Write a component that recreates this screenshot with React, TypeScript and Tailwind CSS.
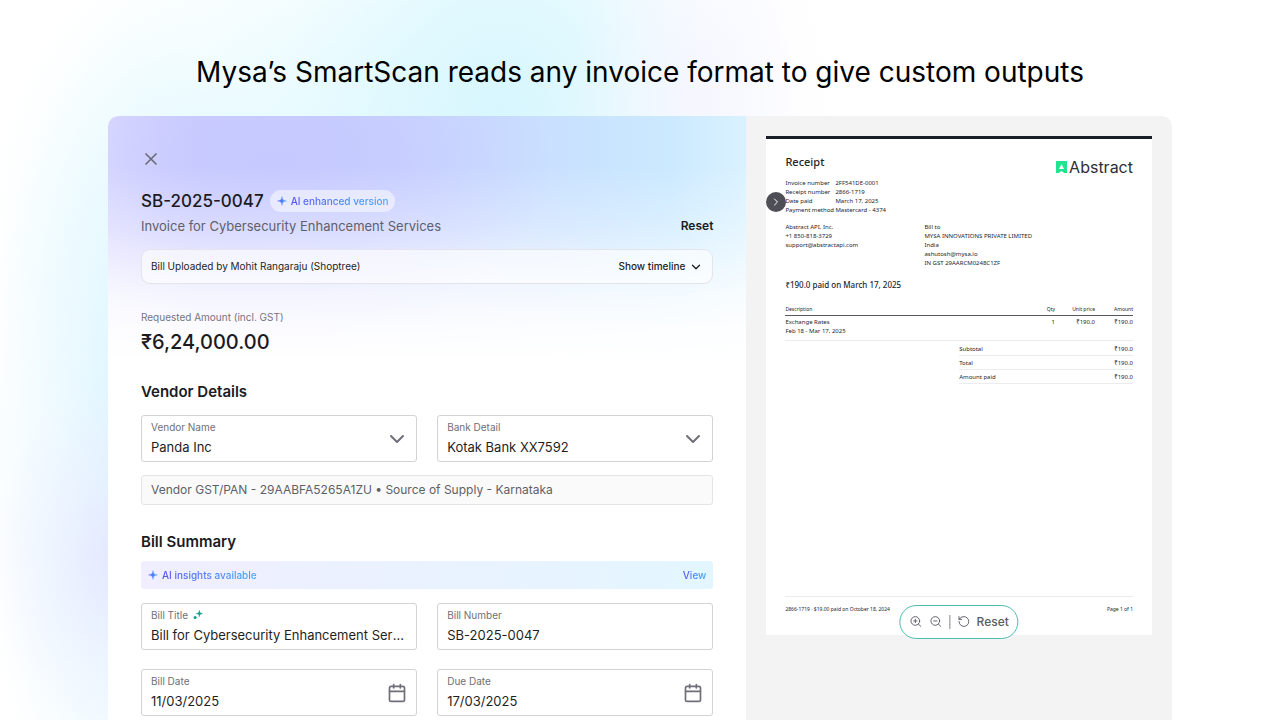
import React from 'react';
import { Calendar, ChevronDown, ChevronRight, RotateCcw, X, ZoomIn, ZoomOut } from 'lucide-react';

const receiptMeta = [
  { label: 'Invoice number', value: '2FF541DE-0001' },
  { label: 'Receipt number', value: '2866-1719' },
  { label: 'Date paid', value: 'March 17, 2025' },
  { label: 'Payment method', value: 'Mastercard - 4374' },
];

const sellerLines = ['Abstract API, Inc.', '+1 850-818-3729', 'support@abstractapi.com'];

const buyerLines = [
  'Bill to',
  'MYSA INNOVATIONS PRIVATE LIMITED',
  'India',
  'ashutosh@mysa.io',
  'IN GST 29AARCM0248C1ZF',
];

const totals = [
  { label: 'Subtotal', value: '₹190.0' },
  { label: 'Total', value: '₹190.0' },
  { label: 'Amount paid', value: '₹190.0' },
];

const Sparkle: React.FC = () => (
  <svg className="h-[10px] w-[10px] shrink-0" viewBox="0 0 10 10" aria-hidden="true">
    <defs>
      <linearGradient id="sparkle" x1="0" y1="0" x2="1" y2="0">
        <stop offset="0" stopColor="#5a55f5" />
        <stop offset="1" stopColor="#3fa9fb" />
      </linearGradient>
    </defs>
    <path
      d="M5 0.6C5.3 3.8 6.2 4.7 9.4 5C6.2 5.3 5.3 6.2 5 9.4C4.7 6.2 3.8 5.3 0.6 5C3.8 4.7 4.7 3.8 5 0.6Z"
      fill="url(#sparkle)"
      stroke="url(#sparkle)"
      strokeWidth="0.4"
    />
  </svg>
);

const GreenSparkles: React.FC = () => (
  <svg className="h-[10px] w-[10px]" viewBox="0 0 10 10" fill="#0f9f8f" aria-hidden="true">
    <path d="M6.4 0.6C6.7 2.8 7.2 3.3 9.4 3.6C7.2 3.9 6.7 4.4 6.4 6.6C6.1 4.4 5.6 3.9 3.4 3.6C5.6 3.3 6.1 2.8 6.4 0.6Z" stroke="#0f9f8f" strokeWidth="0.6" />
    <circle cx="2.1" cy="7.4" r="1.5" />
  </svg>
);

interface FieldProps {
  id: string;
  label: string;
  value: string;
  kind?: 'select' | 'date' | 'text';
  sparkle?: boolean;
}

const Field: React.FC<FieldProps> = ({ id, label, value, kind = 'text', sparkle }) => (
  <div className="flex h-[47px] items-center rounded-[3px] border border-[#d3d3d6] bg-white pr-[7px] pl-[9px]">
    <div className="flex min-w-0 flex-1 flex-col gap-[2px] pb-[2px]">
      <label htmlFor={id} className="flex items-center gap-[5px] text-[10px] leading-4 text-[#6f6f7a]">
        {label}
        {sparkle && <GreenSparkles />}
      </label>
      {kind === 'select' ? (
        <select id={id} className="h-5 appearance-none bg-transparent text-[13px] leading-5 text-[#1f1f23] outline-none">
          <option>{value}</option>
        </select>
      ) : (
        <input
          id={id}
          defaultValue={value}
          className="h-5 w-full truncate bg-transparent text-[13px] leading-5 text-[#1f1f23] outline-none"
        />
      )}
    </div>
    {kind === 'select' && <ChevronDown className="h-6 w-6 shrink-0 text-[#6f6f7a]" />}
    {kind === 'date' && (
      <button type="button" aria-label={`Pick ${label}`} className="px-[2px]">
        <Calendar className="h-5 w-5 text-[#6f6f7a]" />
      </button>
    )}
  </div>
);

const InvoiceForm: React.FC = () => (
  <section className="rounded-tl-[10px] bg-white bg-[linear-gradient(to_bottom,rgba(255,255,255,0)_0px,rgba(255,255,255,0)_50px,rgba(255,255,255,0.3)_110px,rgba(255,255,255,0.8)_180px,rgba(255,255,255,0.94)_215px,#fff_246px),radial-gradient(ellipse_280px_180px_at_26%_50px,#c5c9ff_0%,rgba(197,201,255,0.5)_50%,rgba(197,201,255,0)_100%),linear-gradient(to_right,#dfdcff_0%,#cfcdff_14%,#cacfff_35%,#cadaff_55%,#c9e3ff_75%,#cbe9ff_88%,#daf2ff_100%)] bg-[length:100%_246px] bg-no-repeat px-[33px]">
    <div className="pt-[33px]">
      <button type="button" aria-label="Close" className="block">
        <X className="h-5 w-5 text-[#6b6b75]" />
      </button>
    </div>

    <div className="mt-5 flex items-center gap-[6px]">
      <h2 className="text-[17px] leading-6 font-medium text-[#1b1b1f]">SB-2025-0047</h2>
      <span className="flex h-[22px] items-center gap-1 rounded-full bg-white/50 px-[7px]">
        <Sparkle />
        <span className="bg-linear-to-r from-[#5552f3] to-[#3fa9fb] bg-clip-text text-[10px] leading-4 font-medium text-transparent">
          AI enhanced version
        </span>
      </span>
    </div>

    <div className="mt-px flex items-center justify-between">
      <p className="text-[13px] leading-6 text-[#5f5f6b]">Invoice for Cybersecurity Enhancement Services</p>
      <button type="button" className="text-[12px] leading-6 font-semibold text-[#1b1b1f]">Reset</button>
    </div>

    <div className="mt-[11px] flex h-[35px] items-center justify-between rounded-[9px] border border-[#e4e4ea] bg-white/60 px-[9px] text-[10px] text-[#1f1f23]">
      <span>Bill Uploaded by Mohit Rangaraju (Shoptree)</span>
      <button type="button" className="flex items-center gap-1 font-medium">
        Show timeline
        <ChevronDown className="h-[14px] w-[14px]" strokeWidth={2.25} />
      </button>
    </div>

    <p className="mt-[25px] text-[10px] leading-4 text-[#757580]">Requested Amount (incl. GST)</p>
    <p className="mt-[3px] text-[20px] leading-7 font-medium text-[#1b1b1f]">₹6,24,000.00</p>

    <h3 className="mt-6 text-[15px] leading-6 font-semibold text-[#1b1b1f]">Vendor Details</h3>
    <div className="mt-[11px] grid grid-cols-2 gap-5">
      <Field id="vendor" label="Vendor Name" value="Panda Inc" kind="select" />
      <Field id="bank" label="Bank Detail" value="Kotak Bank XX7592" kind="select" />
    </div>
    <p className="mt-[13px] flex h-[30px] items-center rounded-[3px] border border-[#e4e4e6] bg-[#fafafa] px-[9px] text-[12px] text-[#5f5f68]">
      Vendor GST/PAN - 29AABFA5265A1ZU • Source of Supply - Karnataka
    </p>

    <h3 className="mt-[25px] text-[15px] leading-6 font-semibold text-[#1b1b1f]">Bill Summary</h3>
    <div className="mt-[7px] flex h-[28px] items-center justify-between rounded-[3px] bg-linear-to-r from-[#f0eeff] to-[#e3f6ff] px-[7px] text-[10px] leading-4 font-medium">
      <span className="flex items-center gap-1">
        <Sparkle />
        <span className="bg-linear-to-r from-[#5552f3] to-[#3fa9fb] bg-clip-text text-transparent">AI insights available</span>
      </span>
      <button type="button" className="bg-linear-to-r from-[#5552f3] to-[#3fa9fb] bg-clip-text text-transparent">
        View
      </button>
    </div>
    <div className="mt-[14px] grid grid-cols-2 gap-x-5 gap-y-[19px] pb-1">
      <Field id="title" label="Bill Title" value="Bill for Cybersecurity Enhancement Services" sparkle />
      <Field id="number" label="Bill Number" value="SB-2025-0047" />
      <Field id="billDate" label="Bill Date" value="11/03/2025" kind="date" />
      <Field id="dueDate" label="Due Date" value="17/03/2025" kind="date" />
    </div>
  </section>
);

const Receipt: React.FC = () => (
  <article className="relative flex aspect-[385/498] flex-col border-t-[3px] border-[#1a1f27] bg-white px-[19px] pt-[15px] font-['Noto_Sans',sans-serif] text-[6px] leading-[9px] text-[#23262b]">
    <div className="flex items-start justify-between">
      <h2 className="text-[11px] leading-4 font-medium">Receipt</h2>
      <div className="mt-[5px] flex items-center gap-[2px]">
        <svg className="h-3 w-[11px]" viewBox="0 0 11 12" aria-hidden="true">
          <path d="M0 0H11V12H8.2L5.5 10L2.8 12H0Z" fill="#1fe490" />
          <path d="M5.5 3L8 8H3Z" fill="#fff" />
        </svg>
        <span className="font-['Inter',sans-serif] text-[16px] leading-4 text-[#2c3038]">Abstract</span>
      </div>
    </div>

    <dl className="mt-1 grid grid-cols-[50px_1fr]">
      {receiptMeta.map((row) => (
        <React.Fragment key={row.label}>
          <dt>{row.label}</dt>
          <dd>{row.value}</dd>
        </React.Fragment>
      ))}
    </dl>

    <div className="mt-2 grid grid-cols-[2fr_3fr]">
      <div>{sellerLines.map((line) => <p key={line}>{line}</p>)}</div>
      <div>{buyerLines.map((line) => <p key={line}>{line}</p>)}</div>
    </div>

    <h3 className="mt-[9px] text-[8px] leading-4 font-medium">₹190.0 paid on March 17, 2025</h3>

    <table className="mt-3 w-full text-right">
      <thead className="border-b border-[#55585e] text-[5px]">
        <tr>
          <th className="pb-px text-left font-normal">Description</th>
          <th className="w-10 pb-px font-normal">Qty</th>
          <th className="w-10 pb-px font-normal">Unit price</th>
          <th className="w-[38px] pb-px font-normal">Amount</th>
        </tr>
      </thead>
      <tbody className="border-b border-[#ececee] align-top">
        <tr>
          <td className="pt-[2px] pb-1 text-left">
            Exchange Rates
            <br />
            Feb 18 - Mar 17, 2025
          </td>
          <td className="pt-[2px]">1</td>
          <td className="pt-[2px]">₹190.0</td>
          <td className="pt-[2px]">₹190.0</td>
        </tr>
      </tbody>
    </table>

    <dl className="mt-px ml-auto w-1/2">
      {totals.map((row) => (
        <div key={row.label} className="flex h-[14px] items-end justify-between border-b border-[#ececee] pb-px">
          <dt>{row.label}</dt>
          <dd>{row.value}</dd>
        </div>
      ))}
    </dl>

    <footer className="mt-auto flex justify-between border-t border-[#ececee] pt-2 pb-[21px] text-[5px]">
      <span>2866-1719 · $19.00 paid on October 18, 2024</span>
      <span>Page 1 of 1</span>
    </footer>

    <button
      type="button"
      aria-label="Next"
      className="absolute top-[53px] left-0 flex h-5 w-5 items-center justify-center rounded-full bg-[#4e4e57] text-white"
    >
      <ChevronRight className="h-3 w-3" />
    </button>

    <div className="absolute -bottom-1 left-1/2 flex h-[34px] -translate-x-1/2 items-center gap-[7px] rounded-full border border-[#4cbcaf] bg-white px-[9px] font-['Inter',sans-serif] text-[#5c5c66]">
      <button type="button" aria-label="Zoom in">
        <ZoomIn className="h-[13px] w-[13px]" strokeWidth={1.75} />
      </button>
      <button type="button" aria-label="Zoom out">
        <ZoomOut className="h-[13px] w-[13px]" strokeWidth={1.75} />
      </button>
      <span className="h-[14px] w-px bg-[#85858d]" />
      <button type="button" className="flex items-center gap-[6px] text-[12px] leading-4 font-medium">
        <RotateCcw className="h-[13px] w-[13px]" strokeWidth={1.75} />
        Reset
      </button>
    </div>
  </article>
);

const App: React.FC = () => (
  <main className="flex min-h-screen flex-col bg-white bg-[radial-gradient(ellipse_130px_200px_at_700px_100px,rgba(247,244,255,0.8)_0%,rgba(247,244,255,0.35)_50%,rgba(247,244,255,0)_100%),radial-gradient(ellipse_300px_340px_at_500px_110px,rgba(208,245,254,0.85)_0%,rgba(210,246,254,0.65)_35%,rgba(220,248,255,0.2)_75%,rgba(220,248,255,0)_100%),radial-gradient(ellipse_130px_180px_at_120px_560px,rgba(228,228,255,0.8)_0%,rgba(232,232,255,0.35)_50%,rgba(236,236,255,0)_100%),radial-gradient(ellipse_170px_440px_at_150px_460px,rgba(212,241,255,0.85)_0%,rgba(220,245,255,0.5)_50%,rgba(228,248,255,0)_100%),radial-gradient(ellipse_250px_300px_at_240px_230px,rgba(218,248,255,0.8)_0%,rgba(222,249,255,0.45)_50%,rgba(228,250,255,0)_100%)] font-['Inter',sans-serif]">
    <header className="px-8 pt-[52px] pb-6 text-center">
      <h1 className="text-[28px] leading-10 text-black">
        Mysa’s SmartScan reads any invoice format to give custom outputs
      </h1>
    </header>
    <div className="mx-[108px] grid flex-1 grid-cols-[3fr_2fr] overflow-hidden rounded-t-[10px] bg-[#f3f3f3]">
      <InvoiceForm />
      <aside className="px-5 pt-5">
        <Receipt />
      </aside>
    </div>
  </main>
);

export default App;
